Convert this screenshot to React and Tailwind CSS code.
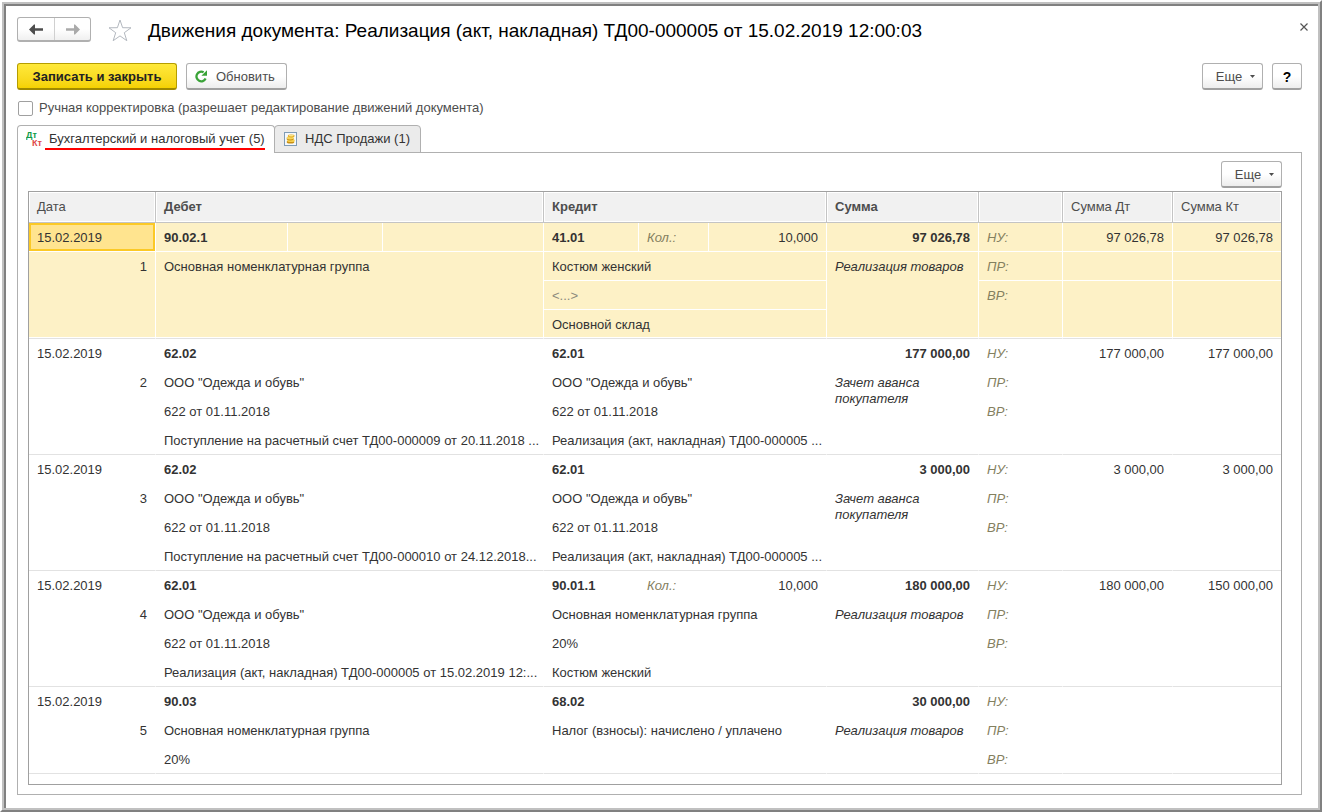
import React from 'react';
import { clsx } from 'clsx';

const SALE = 'Реализация товаров';
const OFFSET = 'Зачет аванса покупателя';
const GROUP = 'Основная номенклатурная группа';
const CLIENT = 'ООО "Одежда и обувь"';
const CONTRACT = '622 от 01.11.2018';

const ENTRIES = [
    {
        date: '15.02.2019',
        selected: true,
        debit: { account: '90.02.1', lines: [GROUP] },
        credit: { account: '41.01', qty: '10,000', lines: ['Костюм женский', '<...>', 'Основной склад'] },
        sum: '97 026,78',
        note: SALE,
        sumDt: '97 026,78',
        sumKt: '97 026,78',
    },
    {
        date: '15.02.2019',
        debit: { account: '62.02', lines: [CLIENT, CONTRACT, 'Поступление на расчетный счет ТД00-000009 от 20.11.2018 ...'] },
        credit: { account: '62.01', lines: [CLIENT, CONTRACT, 'Реализация (акт, накладная) ТД00-000005 ...'] },
        sum: '177 000,00',
        note: OFFSET,
        sumDt: '177 000,00',
        sumKt: '177 000,00',
    },
    {
        date: '15.02.2019',
        debit: { account: '62.02', lines: [CLIENT, CONTRACT, 'Поступление на расчетный счет ТД00-000010 от 24.12.2018...'] },
        credit: { account: '62.01', lines: [CLIENT, CONTRACT, 'Реализация (акт, накладная) ТД00-000005 ...'] },
        sum: '3 000,00',
        note: OFFSET,
        sumDt: '3 000,00',
        sumKt: '3 000,00',
    },
    {
        date: '15.02.2019',
        debit: { account: '62.01', lines: [CLIENT, CONTRACT, 'Реализация (акт, накладная) ТД00-000005 от 15.02.2019 12:...'] },
        credit: { account: '90.01.1', qty: '10,000', lines: [GROUP, '20%', 'Костюм женский'] },
        sum: '180 000,00',
        note: SALE,
        sumDt: '180 000,00',
        sumKt: '150 000,00',
    },
    {
        date: '15.02.2019',
        debit: { account: '90.03', lines: [GROUP, '20%'] },
        credit: { account: '68.02', lines: ['Налог (взносы): начислено / уплачено'] },
        sum: '30 000,00',
        note: SALE,
        sumDt: '',
        sumKt: '',
    },
];

const BUTTON = 'flex items-center rounded-[3px] border border-[#b0b0b0] border-b-2 border-b-[#a0a0a0] bg-linear-to-b from-white from-50% to-[#ededed] pt-px text-[#4d4d4d]';

const ArrowIcon = ({ flip }) => (
    <svg width="16" height="12" viewBox="0 0 16 12" aria-hidden="true">
        <g transform={flip ? 'matrix(-1 0 0 1 16 0)' : undefined}>
            <path d="M1 6.5 L6 1.6 H7 V5.2 H15 V7.8 H7 V11.4 H6 Z" fill="currentColor" />
        </g>
    </svg>
);

const StarIcon = () => (
    <svg width="24" height="23" viewBox="0 0 24 23" aria-hidden="true">
        <path
            d="M12 1 L14.6 8.7 L23 8.8 L16.3 13.7 L18.8 21.7 L12 16.9 L5.2 21.7 L7.7 13.7 L1 8.8 L9.4 8.7 Z"
            fill="#fff"
            stroke="#b3b8bf"
            strokeWidth="1"
        />
    </svg>
);

const RefreshIcon = () => (
    <svg width="14" height="14" viewBox="0 0 14 14" aria-hidden="true">
        <path d="M10.6 8.6 A4.8 4.8 0 1 1 8.6 2.3" fill="none" stroke="#3aa338" strokeWidth="2.3" />
        <path d="M6.4 5.8 H12 V0.2 Z" fill="#3aa338" />
    </svg>
);

const DtKtIcon = () => (
    <svg width="18" height="16" viewBox="0 0 18 16" aria-hidden="true" fontFamily="Liberation Sans, sans-serif" fontWeight="bold">
        <text x="0" y="7" fontSize="9" fill="#0f9b48">Дт</text>
        <text x="6" y="15" fontSize="9" fill="#e04848">Кт</text>
    </svg>
);

const RegisterIcon = () => (
    <svg width="13" height="14" viewBox="0 0 13 14" aria-hidden="true">
        <rect x="0.5" y="0.5" width="12" height="13" fill="#f4f8fc" stroke="#7f9bb5" />
        <ellipse cx="6.5" cy="10" rx="3.8" ry="1.5" fill="#c98f12" />
        <ellipse cx="7" cy="8.6" rx="3.8" ry="1.5" fill="#f5cf4d" />
        <ellipse cx="6.2" cy="7" rx="3.6" ry="1.4" fill="#c98f12" />
        <ellipse cx="6.2" cy="6" rx="3.6" ry="1.4" fill="#f7d65c" />
        <ellipse cx="7.2" cy="4" rx="3.4" ry="1.4" fill="#dfa820" />
        <ellipse cx="7.2" cy="3.6" rx="2.6" ry="0.9" fill="#fbe48a" />
    </svg>
);

const MoreButton = () => (
    <button type="button" className={clsx(BUTTON, 'h-[27px] w-[61px] justify-center gap-2 pl-1.5')}>
        Еще
        <svg width="5" height="3" viewBox="0 0 5 3" aria-hidden="true">
            <path d="M0 0 H5 L2.5 3 Z" fill="#4d4d4d" />
        </svg>
    </button>
);

// One table cell; "last" marks the cells that touch the bottom edge of an entry.
const Cell = ({ selected, last, edge, active, className, children, ...rest }) => (
    <td
        className={clsx(
            'overflow-hidden border-b px-2 pt-[7px] align-top leading-4 whitespace-nowrap',
            !edge && 'border-r border-r-white',
            last ? 'border-b-[#e2e2e2]' : 'border-b-white',
            selected && !active && 'bg-[#fdf1c6]',
            selected && last && 'shadow-[inset_0_-1px_0_#fff]',
            active && 'bg-[#ffe48f] shadow-[inset_0_0_0_2px_#fbc926]',
            className
        )}
        {...rest}
    >
        {children}
    </td>
);

const AccountCells = ({ side, split, selected }) => {
    if (!split) {
        return <Cell selected={selected} colSpan={3} className="font-bold">{side.account}</Cell>;
    }
    return (
        <>
            <Cell selected={selected} className="font-bold">{side.account}</Cell>
            <Cell selected={selected} className="text-[#84805f] italic">{side.qty && 'Кол.:'}</Cell>
            <Cell selected={selected} className="text-right">{side.qty}</Cell>
        </>
    );
};

// The last line of a side stretches down to the end of the entry.
const LineCell = ({ side, index, depth, selected }) => {
    if (index >= side.lines.length) {
        return null;
    }
    const span = index === side.lines.length - 1 ? depth - index : 1;
    const text = side.lines[index];
    return (
        <Cell
            selected={selected}
            colSpan={3}
            rowSpan={span}
            last={index + span === depth}
            className={text === '<...>' && 'text-[#8c8a7c]'}
        >
            {text}
        </Cell>
    );
};

const Entry = ({ entry, number }) => {
    const { selected, debit, credit } = entry;
    const depth = Math.max(debit.lines.length, credit.lines.length);
    const rows = Array.from({ length: depth }, (_, i) => i);

    return (
        <tbody>
            <tr className="h-[29px]">
                <Cell selected={selected} active={selected}>{entry.date}</Cell>
                <AccountCells side={debit} split={selected} selected={selected} />
                <AccountCells side={credit} split={selected || credit.qty} selected={selected} />
                <Cell selected={selected} className="text-right font-bold">{entry.sum}</Cell>
                <Cell selected={selected} className="text-[#84805f] italic">НУ:</Cell>
                <Cell selected={selected} className="text-right">{entry.sumDt}</Cell>
                <Cell selected={selected} edge className="text-right">{entry.sumKt}</Cell>
            </tr>
            {rows.map((i) => {
                const span = i === 1 ? depth - 1 : 1;
                const last = i + span === depth;
                return (
                    <tr key={i} className="h-[29px]">
                        {i === 0 && (
                            <Cell selected={selected} rowSpan={depth} last className="text-right">{number}</Cell>
                        )}
                        <LineCell side={debit} index={i} depth={depth} selected={selected} />
                        <LineCell side={credit} index={i} depth={depth} selected={selected} />
                        {i === 0 && (
                            <Cell selected={selected} rowSpan={depth} last className="italic">
                                <div className="whitespace-normal">{entry.note}</div>
                            </Cell>
                        )}
                        {i < 2 && (
                            <>
                                <Cell selected={selected} rowSpan={span} last={last} className="text-[#84805f] italic">
                                    {i === 0 ? 'ПР:' : 'ВР:'}
                                </Cell>
                                <Cell selected={selected} rowSpan={span} last={last} />
                                <Cell selected={selected} rowSpan={span} last={last} edge />
                            </>
                        )}
                    </tr>
                );
            })}
        </tbody>
    );
};

const HeadCell = ({ edge, className, children, ...rest }) => (
    <th
        scope="col"
        className={clsx(
            'h-[31px] border-b border-[#c4c4c4] bg-[#f1f1f1] px-2 text-left leading-4 text-[#4d4d4d] shadow-[inset_0_0_0_1px_#fff]',
            !edge && 'border-r',
            className
        )}
        {...rest}
    >
        {children}
    </th>
);

const EntriesTable = () => (
    <table className="w-full table-fixed border-separate border-spacing-0">
        <colgroup>
            <col className="w-[127px]" />
            <col className="w-[132px]" />
            <col className="w-[95px]" />
            <col />
            <col className="w-[95px]" />
            <col className="w-[70px]" />
            <col className="w-[118px]" />
            <col className="w-[152px]" />
            <col className="w-[84px]" />
            <col className="w-[110px]" />
            <col className="w-[108px]" />
        </colgroup>
        <thead>
            <tr>
                <HeadCell className="font-normal">Дата</HeadCell>
                <HeadCell colSpan={3}>Дебет</HeadCell>
                <HeadCell colSpan={3}>Кредит</HeadCell>
                <HeadCell>Сумма</HeadCell>
                <HeadCell />
                <HeadCell className="font-normal">Сумма Дт</HeadCell>
                <HeadCell edge className="font-normal">Сумма Кт</HeadCell>
            </tr>
        </thead>
        {ENTRIES.map((entry, i) => (
            <Entry key={i} entry={entry} number={i + 1} />
        ))}
    </table>
);

const App = () => (
    <div className="flex min-h-screen border-2 border-t-white border-r-[#808080] border-b-[#808080] border-l-white bg-white font-['Liberation_Sans',Arial,sans-serif] text-[13px] leading-4 text-[#333]">
        <div className="flex min-w-0 flex-1 border-2 border-[#c0c0c0]">
            <div className="flex min-w-0 flex-1 flex-col border-t-2 border-l-2 border-[#808080] pt-[11px] pr-4 pb-[13px] pl-[11px]">
                <header className="flex h-[26px] items-center">
                    <div className="flex h-[25px] self-start rounded-[3px] border border-b-2 border-[#b0b0b0] bg-linear-to-b from-white from-50% to-[#f0f0f0]">
                        <button type="button" aria-label="Назад" className="flex w-9 items-center justify-center text-[#4d4d4d]">
                            <ArrowIcon />
                        </button>
                        <button type="button" aria-label="Вперед" className="flex w-9 items-center justify-center border-l border-[#d0d0d0] text-[#aaa]">
                            <ArrowIcon flip />
                        </button>
                    </div>
                    <button type="button" aria-label="В избранное" className="ml-[17px]">
                        <StarIcon />
                    </button>
                    <h1 className="ml-4 flex-1 pt-px text-[19px] leading-6 text-black">
                        Движения документа: Реализация (акт, накладная) ТД00-000005 от 15.02.2019 12:00:03
                    </h1>
                    <button type="button" aria-label="Закрыть" className="-mr-3 self-start p-1.5">
                        <svg width="8" height="8" viewBox="0 0 8 8" aria-hidden="true">
                            <path d="M0.5 0.5 L7.5 7.5 M7.5 0.5 L0.5 7.5" stroke="#555" strokeWidth="1.2" />
                        </svg>
                    </button>
                </header>

                <div className="mt-5 flex items-center gap-[9px]">
                    <button type="button" className="h-[27px] w-40 rounded-[3px] border border-b-2 border-[#b59d00] border-b-[#a08a00] bg-linear-to-b from-[#ffe939] to-[#f5d200] pt-px font-bold text-[#222]">
                        Записать и закрыть
                    </button>
                    <button type="button" className={clsx(BUTTON, 'h-[27px] w-[101px] gap-[7px] pl-2')}>
                        <RefreshIcon />
                        Обновить
                    </button>
                    <div className="ml-auto flex gap-[9px]">
                        <MoreButton />
                        <button type="button" aria-label="Справка" className={clsx(BUTTON, 'h-[27px] w-[30px] justify-center text-sm font-bold text-black')}>
                            ?
                        </button>
                    </div>
                </div>

                <label className="mt-[9px] flex items-center gap-1.5 self-start pt-px pl-px text-[#4d4d4d]">
                    <input type="checkbox" className="size-[15px] appearance-none rounded-xs border border-[#a0a0a0] bg-white" />
                    Ручная корректировка (разрешает редактирование движений документа)
                </label>

                <div role="tablist" className="mt-[9px] -mb-px flex">
                    <button type="button" role="tab" aria-selected="true" className="z-10 flex h-7 w-[258px] items-start gap-px rounded-t-[4px] border border-b-0 border-[#b0b0b0] bg-white pt-[5px] pl-2">
                        <DtKtIcon />
                        <span className="border-b-2 border-[#f00] pb-px pl-1 leading-4 whitespace-nowrap">
                            Бухгалтерский и налоговый учет (5)
                        </span>
                    </button>
                    <button type="button" role="tab" aria-selected="false" className="-ml-px flex h-7 w-[147px] items-center gap-2 rounded-t-[4px] border border-[#b0b0b0] bg-[#ebebeb] pl-[9px]">
                        <RegisterIcon />
                        НДС Продажи (1)
                    </button>
                </div>

                <main className="flex flex-1 flex-col border border-[#b0b0b0] px-2.5 pt-2 pb-[9px]">
                    <div className="flex justify-end pr-[9px]">
                        <MoreButton />
                    </div>
                    <div className="mt-[3px] mr-[9px] flex-1 border border-[#a0a0a0]">
                        <EntriesTable />
                    </div>
                </main>
            </div>
        </div>
    </div>
);

export default App;
